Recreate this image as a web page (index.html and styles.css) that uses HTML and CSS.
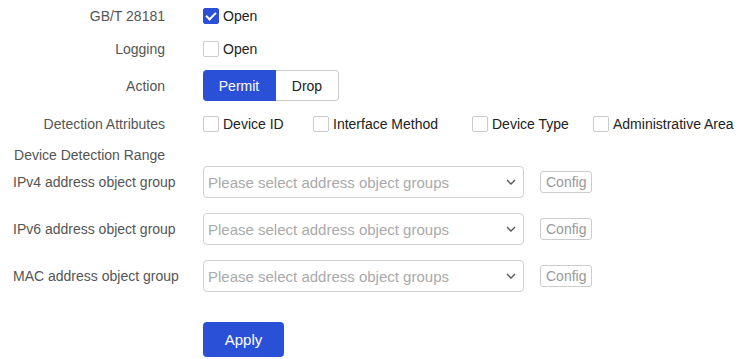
FILE: index.html
```html
<!DOCTYPE html>
<html lang="en">
<head>
  <meta charset="UTF-8">
  <title>Device Detection</title>
  <link rel="stylesheet" href="styles.css">
</head>
<body>
  <form class="settings">
    <div class="row row-first">
      <label class="label">GB/T 28181</label>
      <div class="control">
        <span class="check checked"></span>
        <span class="check-text">Open</span>
      </div>
    </div>

    <div class="row row-log">
      <label class="label">Logging</label>
      <div class="control">
        <span class="check"></span>
        <span class="check-text">Open</span>
      </div>
    </div>

    <div class="row row-action">
      <label class="label">Action</label>
      <div class="control">
        <div class="segment">
          <span class="seg seg-active">Permit</span>
          <span class="seg">Drop</span>
        </div>
      </div>
    </div>

    <div class="row row-attrs">
      <label class="label">Detection Attributes</label>
      <div class="control attrs">
        <span class="attr attr-id"><span class="check"></span><span class="check-text">Device ID</span></span>
        <span class="attr attr-method"><span class="check"></span><span class="check-text">Interface Method</span></span>
        <span class="attr attr-type"><span class="check"></span><span class="check-text">Device Type</span></span>
        <span class="attr"><span class="check"></span><span class="check-text">Administrative Area</span></span>
      </div>
    </div>

    <div class="row row-range">
      <label class="label">Device Detection Range</label>
    </div>

    <div class="row row-group">
      <label class="label label-left">IPv4 address object group</label>
      <div class="control">
        <div class="select">
          <span class="placeholder">Please select address object groups</span>
          <svg class="chevron" width="10" height="6" viewBox="0 0 10 6"><path d="M1 1l4 4 4-4" fill="none" stroke="#555" stroke-width="1.3"/></svg>
        </div>
        <span class="config">Config</span>
      </div>
    </div>

    <div class="row row-group row-gap">
      <label class="label label-left">IPv6 address object group</label>
      <div class="control">
        <div class="select">
          <span class="placeholder">Please select address object groups</span>
          <svg class="chevron" width="10" height="6" viewBox="0 0 10 6"><path d="M1 1l4 4 4-4" fill="none" stroke="#555" stroke-width="1.3"/></svg>
        </div>
        <span class="config">Config</span>
      </div>
    </div>

    <div class="row row-group row-gap">
      <label class="label label-left">MAC address object group</label>
      <div class="control">
        <div class="select">
          <span class="placeholder">Please select address object groups</span>
          <svg class="chevron" width="10" height="6" viewBox="0 0 10 6"><path d="M1 1l4 4 4-4" fill="none" stroke="#555" stroke-width="1.3"/></svg>
        </div>
        <span class="config">Config</span>
      </div>
    </div>

    <div class="row row-submit">
      <span class="label"></span>
      <button type="button" class="apply">Apply</button>
    </div>
  </form>
</body>
</html>
```

FILE: styles.css
```css
html {
  box-sizing: border-box;
  font-family: "Liberation Sans", Arial, sans-serif;
  font-size: 14px;
}

body {
  margin: 0;
  background: #fff;
  color: #333;
  overflow: hidden;
}

.settings {
  display: flex;
  flex-direction: column;
}

.row {
  display: flex;
  align-items: center;
  height: 32px;
  white-space: nowrap;
}
.row-log { margin-top: 1px; }
.row-action { margin-top: 5px; height: 31px; }
.row-attrs { margin-top: 7px; }
.row-range { margin-top: 5px; height: 20px; }
.row-group { margin-top: 1px; }
.row-gap { margin-top: 15px; }
.row-submit { margin-top: 30px; height: 35px; }

.label {
  width: 165px;
  padding-right: 38px;
  text-align: right;
  color: #555;
  flex: none;
}
.label-left {
  width: 190px;
  padding-left: 13px;
  padding-right: 0;
  text-align: left;
}

.control {
  display: flex;
  align-items: center;
  flex: none;
}

.check {
  width: 16px;
  height: 16px;
  box-sizing: border-box;
  border: 1px solid #ccc;
  border-radius: 2px;
  background: #fff;
  position: relative;
  flex: none;
}
.check.checked {
  background: #2b50d8;
  border-color: #2b50d8;
}
.check.checked::after {
  content: "";
  position: absolute;
  left: 4px;
  top: 1px;
  width: 4px;
  height: 8px;
  border: solid #fff;
  border-width: 0 2px 2px 0;
  transform: rotate(45deg);
}
.check-text {
  margin-left: 4px;
  color: #222;
}

.attrs .attr {
  display: flex;
  align-items: center;
  flex: none;
}
.attr-id { width: 110px; }
.attr-method { width: 159px; }
.attr-type { width: 121px; }

.segment {
  display: flex;
  height: 31px;
}
.seg {
  display: flex;
  align-items: center;
  justify-content: center;
  box-sizing: border-box;
  border: 1px solid #ccc;
  border-left: none;
  width: 63px;
  color: #222;
  border-radius: 0 4px 4px 0;
}
.seg-active {
  width: 73px;
  background: #2b50d8;
  border-color: #2b50d8;
  color: #fff;
  border-radius: 4px 0 0 4px;
}

.select {
  width: 321px;
  height: 32px;
  box-sizing: border-box;
  border: 1px solid #d0d0d0;
  border-radius: 4px;
  display: flex;
  align-items: center;
  justify-content: space-between;
  padding: 0 7px 0 4px;
}
.placeholder {
  color: #aaa;
  font-size: 15px;
}

.config {
  margin-left: 16px;
  border: 1px solid #ccc;
  border-radius: 3px;
  color: #999;
  padding: 2px 5px;
  line-height: 16px;
}

.apply {
  width: 81px;
  height: 35px;
  border: none;
  border-radius: 4px;
  background: #2b50d8;
  color: #fff;
  font-family: inherit;
  font-size: 15px;
}
```
